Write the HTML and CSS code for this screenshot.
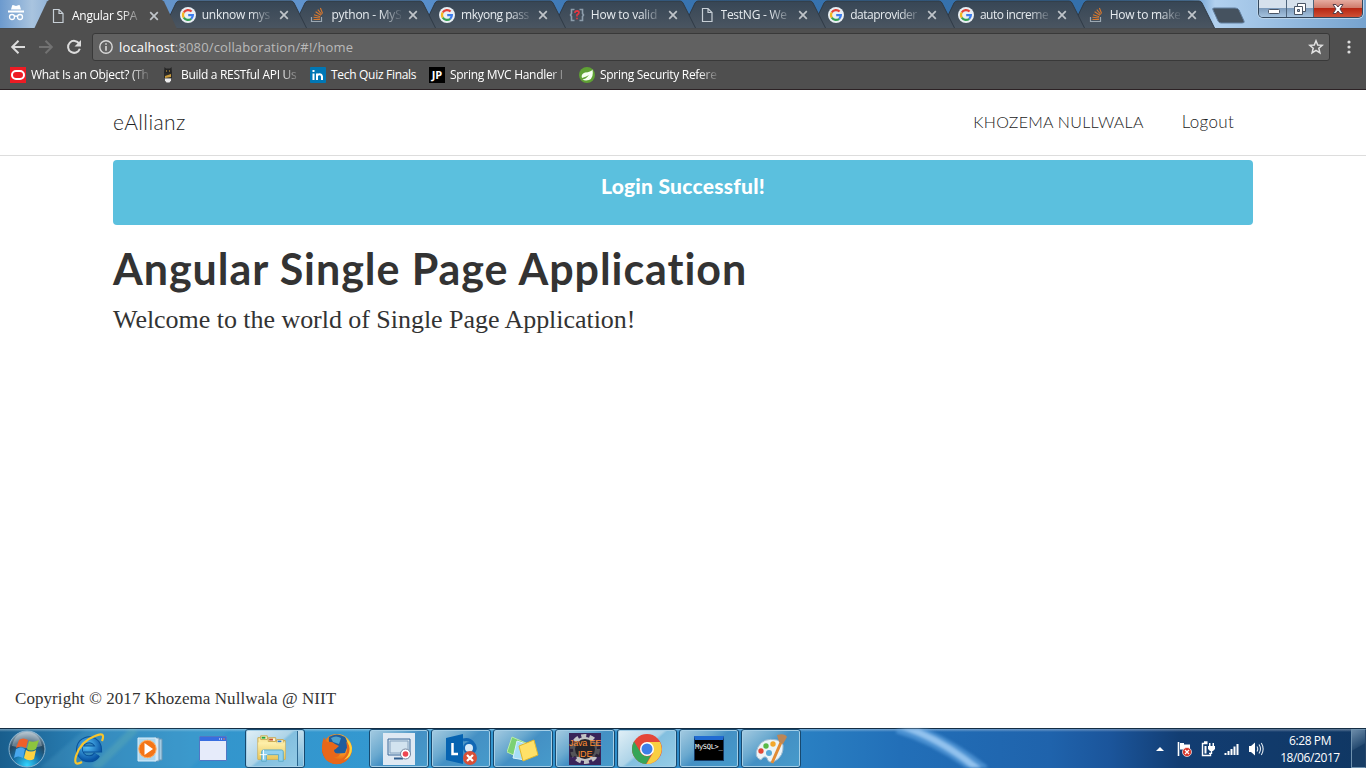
FILE: index.html
```html
<!DOCTYPE html>
<html lang="en">
<head>
<meta charset="utf-8">
<title>Angular SPA</title>
<link rel="stylesheet" href="styles.css">
</head>
<body>
<svg class="defs" width="0" height="0">
  <defs>
    <linearGradient id="tabFill" x1="0" y1="0" x2="0" y2="1"><stop offset="0" stop-color="#374655"/><stop offset="1" stop-color="#4a5561"/></linearGradient>
    <linearGradient id="folder" x1="0" y1="0" x2="0" y2="1"><stop offset="0" stop-color="#fff2b0"/><stop offset="1" stop-color="#e8c659"/></linearGradient>
    <radialGradient id="orb" cx=".5" cy=".95" r=".95"><stop offset="0" stop-color="#30d5ff"/><stop offset=".4" stop-color="#176fa5"/><stop offset=".7" stop-color="#23465f"/><stop offset="1" stop-color="#a9bdca"/></radialGradient>
    <radialGradient id="fox" cx=".65" cy=".3" r=".8"><stop offset="0" stop-color="#ffe04a"/><stop offset=".5" stop-color="#f58a1d"/><stop offset="1" stop-color="#c9400f"/></radialGradient>
    <radialGradient id="iefill" cx=".4" cy=".3" r=".8"><stop offset="0" stop-color="#5bc8fa"/><stop offset="1" stop-color="#0753a5"/></radialGradient>
    <symbol id="tabshape" viewBox="0 0 143 28"><path d="M0 28 12 3Q13 1 15 1H127Q129 1 130 3L142.500 28Z" fill="url(#tabFill)"/><path d="M0 28 12 3Q13 1 15 1H127Q129 1 130 3L142.500 28" fill="none" stroke="#2f3a45"/></symbol>
    <symbol id="doc" viewBox="0 0 16 16"><path d="M3.500 1.500H9L13 5.500V14.500H3.500ZM9 1.500V5.500H13" fill="none" stroke="currentColor" stroke-width="1.200"/></symbol>
    <symbol id="google" viewBox="0 0 16 16"><circle cx="8" cy="8" r="8" fill="#e9eff4"/><g fill="none" stroke-width="2.200"><path d="M11.600 4.600A5 5 0 0 0 3.700 5.500" stroke="#e44336"/><path d="M3.700 5.500A5 5 0 0 0 3.800 10.700" stroke="#f3b61f"/><path d="M3.800 10.700A5 5 0 0 0 11.200 11.800" stroke="#34a053"/><path d="M11.200 11.800A5 5 0 0 0 12.900 8.100H8.200" stroke="#3c7cec"/></g></symbol>
    <symbol id="stack" viewBox="0 0 16 16"><path d="M2.500 10V14.500H12.500V10" fill="none" stroke="#9ca8b2" stroke-width="1.200"/><path d="M4.500 12.500H11M4.500 10.300 11 11M5 7.700 11.200 9.700M6.600 4.700 12 8.200M8.800 2.600 12.800 7.500M11.400 1 13.600 6.500" stroke="#d7782e" stroke-width="1.100"/></symbol>
    <symbol id="question" viewBox="0 0 16 16"><path d="M5.500 2.500H2.500V6.500L1.500 8 2.500 9.500V13.500H5.500M10.500 2.500H13.500V6.500L14.500 8 13.500 9.500V13.500H10.500" fill="none" stroke="#8d9dab" stroke-width="1.600"/><path d="M6 6V5Q6.300 3.800 8 3.800 10 3.900 10 5.500 10 6.700 8 8V9.500M8 10.800V12.200" fill="none" stroke="#e23842" stroke-width="1.700"/></symbol>
    <symbol id="close" viewBox="0 0 10 10"><path d="M1.200 1.200 8.800 8.800M8.800 1.200 1.200 8.800" stroke="currentColor" stroke-width="1.700"/></symbol>
  </defs>
</svg>

<header class="browser">
  <div class="tabstrip">
    <svg class="incognito" viewBox="0 0 18 18"><path d="M5 2Q5 1 6 1L9 2 12 1Q13 1 13 2L14 5.500H4ZM1 6.500H17V8.500H1Z" fill="#fff"/><g fill="none" stroke="#fff" stroke-width="1.300"><circle cx="5" cy="13" r="2.500"/><circle cx="13" cy="13" r="2.500"/><path d="M7.500 12.500Q9 11.500 10.500 12.500"/></g></svg>
    <div class="tabs">
      <div class="tab active"><svg class="favicon"><use href="#doc"/></svg><span class="label">Angular SPA</span><svg class="x"><use href="#close"/></svg></div>
      <div class="tab t2"><svg class="shape"><use href="#tabshape"/></svg><svg class="favicon"><use href="#google"/></svg><span class="label">unknow mys</span><svg class="x"><use href="#close"/></svg></div>
      <div class="tab t3"><svg class="shape"><use href="#tabshape"/></svg><svg class="favicon"><use href="#stack"/></svg><span class="label">python - MyS</span><svg class="x"><use href="#close"/></svg></div>
      <div class="tab t4"><svg class="shape"><use href="#tabshape"/></svg><svg class="favicon"><use href="#google"/></svg><span class="label tight">mkyong pass</span><svg class="x"><use href="#close"/></svg></div>
      <div class="tab t5"><svg class="shape"><use href="#tabshape"/></svg><svg class="favicon"><use href="#question"/></svg><span class="label">How to valid</span><svg class="x"><use href="#close"/></svg></div>
      <div class="tab t6"><svg class="shape"><use href="#tabshape"/></svg><svg class="favicon"><use href="#doc"/></svg><span class="label">TestNG - We</span><svg class="x"><use href="#close"/></svg></div>
      <div class="tab t7"><svg class="shape"><use href="#tabshape"/></svg><svg class="favicon"><use href="#google"/></svg><span class="label tight">dataprovider</span><svg class="x"><use href="#close"/></svg></div>
      <div class="tab t8"><svg class="shape"><use href="#tabshape"/></svg><svg class="favicon"><use href="#google"/></svg><span class="label tight">auto increme</span><svg class="x"><use href="#close"/></svg></div>
      <div class="tab t9"><svg class="shape"><use href="#tabshape"/></svg><svg class="favicon"><use href="#stack"/></svg><span class="label">How to make</span><svg class="x"><use href="#close"/></svg></div>
    </div>
    <svg class="newtab" viewBox="0 0 34 18"><path d="M2 1H23Q26 1 27 3L32 14Q33 16 30 16H9Q7 16 6 14L1 3Q0 1 2 1Z" fill="#45525f" stroke="#6481a1"/></svg>
    <div class="winbuttons">
      <span class="wb min"><svg viewBox="0 0 14 14"><rect x="1.500" y="7.500" width="11" height="4" rx="1" fill="#fff" stroke="#4a5565"/></svg></span>
      <span class="wb max"><svg viewBox="0 0 14 14"><path d="M4.500 1.500H12.500V9.500H4.500Z" fill="#fff" stroke="#4a5565"/><path d="M1.500 4.500H9.500V12.500H1.500Z" fill="#fff" stroke="#4a5565"/><path d="M4.500 7.500H6.500V9.500H4.500Z" fill="#9db4cd" stroke="#4a5565"/></svg></span>
      <span class="wb quit"><svg viewBox="0 0 14 14"><path d="M2 2.500H5L7 5 9 2.500H12L9 7 12 11.500H9L7 9 5 11.500H2L5 7Z" fill="#fff" stroke="#573f4a"/></svg></span>
    </div>
  </div>
  <div class="toolbar">
    <svg class="nav" viewBox="0 0 16 16"><path d="M15 8H2.500M8.500 1.700 2.200 8 8.500 14.300" fill="none" stroke="#dcdcdc" stroke-width="2"/></svg>
    <svg class="nav" viewBox="0 0 16 16"><path d="M1 8H13.500M7.500 1.700 13.800 8 7.500 14.300" fill="none" stroke="#727272" stroke-width="2"/></svg>
    <svg class="nav" viewBox="0 0 16 16"><path d="M13.200 4.700A6 6 0 1 0 13.800 9.700" fill="none" stroke="#dcdcdc" stroke-width="2"/><path d="M15 1V7.500H8.500Z" fill="#dcdcdc"/></svg>
    <div class="omnibox">
      <svg class="info" viewBox="0 0 14 14"><circle cx="7" cy="7" r="6.200" fill="none" stroke="#d8d8d8" stroke-width="1.400"/><path d="M7 3.200V4.800M7 6V10.700" stroke="#d8d8d8" stroke-width="1.600"/></svg>
      <span class="url"><b>localhost</b>:8080/collaboration/#!/home</span>
      <svg class="star" viewBox="0 0 16 16"><path d="M8 1.800 9.700 6 14.300 6.300 10.800 9.300 11.900 13.800 8 11.300 4.100 13.800 5.200 9.300 1.700 6.300 6.300 6Z" fill="none" stroke="#e2e2e2" stroke-width="1.500"/></svg>
    </div>
    <svg class="dots" viewBox="0 0 4 14"><g fill="#dcdcdc"><circle cx="2" cy="2" r="1.600"/><circle cx="2" cy="7" r="1.600"/><circle cx="2" cy="12" r="1.600"/></g></svg>
  </div>
  <nav class="bookmarks">
    <a class="bm b1"><svg viewBox="0 0 16 16"><path fill="#ed1c24" d="M0 0H16V16H0Z"/><rect x="2" y="4" width="12" height="8" rx="4" fill="none" stroke="#fff" stroke-width="2"/></svg><span>What Is an Object? (Th</span></a>
    <a class="bm b2"><svg viewBox="0 0 16 16"><path d="M4.500 0 6 1.500H10L11.500 0 12 6H4Z" fill="#252525"/><path d="M6 4H7M9 4H10" stroke="#d8a83a"/><path d="M4 6H12V11H4Z" fill="#2b2a28"/><path d="M5 9 11 7V10L5 11Z" fill="#c79a3c"/><path d="M5 11.500H11V13.500L9.500 15.500H6.500L5 13.500Z" fill="#eee"/></svg><span>Build a RESTful API Us</span></a>
    <a class="bm b3"><svg viewBox="0 0 16 16"><rect width="16" height="16" rx="1" fill="#0077b5"/><path d="M3.500 6.500V13M3.500 3V5M7 13V6.500M7 9Q7.500 7.300 9.500 7.300T12 9.500V13" fill="none" stroke="#fff" stroke-width="2"/></svg><span>Tech Quiz Finals</span></a>
    <a class="bm b4"><i class="jp">JP</i><span>Spring MVC Handler I</span></a>
    <a class="bm b5"><svg viewBox="0 0 16 16"><circle cx="8" cy="8" r="8" fill="#5fa134"/><path d="M13.500 2.500Q12 5 6 5.500 1.500 7 3 11 7 10 10 8 7 12 3.500 12.500 6 14 10 13 15 11 13.500 2.500Z" fill="#f5fff0"/></svg><span>Spring Security Refere</span></a>
  </nav>
</header>

<main class="page">
  <nav class="navbar"><div class="container">
    <a class="brand">eAllianz</a>
    <div class="links"><a class="user">KHOZEMA NULLWALA</a><a class="logout">Logout</a></div>
  </div></nav>
  <section class="container content">
    <div class="alert">Login Successful!</div>
    <h1>Angular Single Page Application</h1>
    <p>Welcome to the world of Single Page Application!</p>
  </section>
  <footer>Copyright © 2017 Khozema Nullwala @ NIIT</footer>
</main>

<div class="taskbar">
  <svg class="wallpaper" viewBox="0 0 1366 40" preserveAspectRatio="none"><path d="M40 40 85 0H230L190 40Z" fill="#59a7cf" opacity=".22"/><path d="M95 40 135 0" stroke="#8fd3a4" stroke-width="8" opacity=".18"/><path d="M898 -3Q941 10 983 44" fill="none" stroke="#70b2ec" stroke-width="15" opacity=".5"/><path d="M902 -3Q943 11 981 44" fill="none" stroke="#b2d9fb" stroke-width="7" opacity=".7"/></svg>
  <div class="launch start"><svg viewBox="0 0 38 38"><circle cx="19" cy="19" r="18" fill="url(#orb)" stroke="#8bb4cf"/><path d="M4 16Q7 2 19 2T34 16Q20 20 4 16Z" fill="#fff" opacity=".3"/><path d="M11 10Q15 7 20 10L18 18Q13 15 8 18Z" fill="#ee602a"/><path d="M21 11Q26 13 31 10L28 19Q23 22 19 19Z" fill="#8dc53d"/><path d="M8 19Q13 16 17 19L15 28Q10 25 6 28Z" fill="#48a7ed"/><path d="M18 20Q23 23 28 20L26 29Q21 32 16 28Z" fill="#fed241"/></svg></div>
  <div class="launch"><svg viewBox="0 0 32 32"><path d="M24 21.500A9.500 9.500 0 1 1 25.500 16H10" fill="none" stroke="#08529b" stroke-width="7"/><path d="M24 21.500A9.500 9.500 0 1 1 25.500 16H10" fill="none" stroke="url(#iefill)" stroke-width="5"/><path d="M9 29Q0 34 3 23 8 8 22 3 33-2 29 8" fill="none" stroke="#f8c52c" stroke-width="2.200"/></svg></div>
  <div class="launch media"><svg viewBox="0 0 32 32"><path d="M24 6H28V27H24Z" fill="#a5cbe2" stroke="#6997b6"/><path d="M20 5H25V28H20Z" fill="#d6e8f3" stroke="#729cb9"/><path d="M4 5H22V28H4Z" fill="#add7ee" stroke="#d9edfa"/><circle cx="13.500" cy="16" r="8.700" fill="#f47516" stroke="#ffad63"/><path d="M10.500 10V22L19 16Z" fill="#fff"/></svg></div>
  <div class="launch"><svg viewBox="0 0 32 32"><path d="M2.500 3.500H29.500V27.500H2.500Z" fill="#e6ebfa" stroke="#5177c4"/><path d="M3 4H29V8H3Z" fill="#376de0"/><path d="M22 6H23M24 6H25" stroke="#fff"/><path d="M26 6H28" stroke="#ee7450"/></svg></div>
  <div class="task lit group"><svg viewBox="0 0 34 34"><path d="M2 5H12L14 8H31V28H2Z" fill="url(#folder)" stroke="#c9a64c"/><path d="M5 3H12V7H5ZM13 5H21V9H13ZM22 7H29V11H22Z" fill="#fff6d2" stroke="#c9a64c"/><path d="M6 4H10V6H6Z" fill="#20a43d"/><path d="M14 6H18V8H14Z" fill="#c64b2b"/><path d="M23 8H27V10H23Z" fill="#2a7bcf"/><path d="M2 10H31V28H2Z" fill="url(#folder)" opacity=".85"/><path d="M6 30V20Q6 18 8 18H27Q29 18 29 20V30H24V23H11V30Z" fill="#91d1ee" stroke="#5caac8"/><path d="M4 23H12M8 18V28" stroke="#fff"/></svg></div>
  <div class="launch fox"><svg viewBox="0 0 32 32"><circle cx="16" cy="16" r="15" fill="url(#fox)"/><path d="M8 4Q16-1 24 4 29 10 24 20L12 21Q7 13 8 4Z" fill="#1f5d9d"/><path d="M10 5Q15 2 20 5L18 11 12 9Z" fill="#4ca1cf"/><path d="M3 4Q4 8 6 9 11 8 14 11L18 13Q15 16 13 17 13 21 19 21 17 25 12 24 16 29 22 25 28 20 25 8 34 19 25 28 15 35 5 27-2 17 3 4Z" fill="#e8671a"/><path d="M25 6Q33 18 23 27 31 24 31 15 30 9 25 6Z" fill="#ffd33c"/></svg></div>
  <div class="task rec"><svg viewBox="0 0 32 32"><path fill="#dfe9f3" d="M0 0H32V32H0Z"/><path d="M5 6H27V22H5Z" fill="#d2e3ef" stroke="#3c6898"/><path d="M7 8H25V20H7Z" fill="none" stroke="#86a3bf"/><path d="M11 25.500H20" stroke="#315f8f" stroke-width="2"/><circle cx="22.500" cy="21" r="5" fill="#fff" stroke="#74869e"/><circle cx="22.500" cy="21" r="2.800" fill="#ee4650"/></svg></div>
  <div class="task"><svg viewBox="0 0 32 32"><path d="M18 7Q24 5 28 10 34 17 24 22" fill="none" stroke="#1268b5" stroke-width="3"/><circle cx="24" cy="15" r="5" fill="#d8eaf8" stroke="#1268b5" stroke-width="2"/><path d="M1 5 18 1V31L1 27Z" fill="#0663b1"/><path d="M7.500 10V21H13" fill="none" stroke="#fff" stroke-width="2.500"/><circle cx="25" cy="25" r="7" fill="#d75038"/><path d="M22 22 28 28M28 22 22 28" stroke="#fff" stroke-width="2.200"/></svg></div>
  <div class="task"><svg viewBox="0 0 32 32"><path d="M5 4 19 10 13 25 0 19Z" fill="#7cd174" stroke="#b7eba9"/><path d="M10 8 22 12 18 27 6 25Z" fill="#a7def6" stroke="#daf2fc"/><path d="M12 13 27 7 31 22 16 28Z" fill="#ffe168" stroke="#e0b72d"/></svg></div>
  <div class="task java"><div class="javaicon"><svg viewBox="0 0 32 32"><rect width="32" height="32" fill="#392459"/><circle cx="16" cy="16" r="13" fill="none" stroke="#c3c3c5" stroke-width="4" stroke-dasharray="5 3.168"/><circle cx="16" cy="16" r="11" fill="#252329" stroke="#c3c3c5" stroke-width="2"/><path d="M1 8H31V24H1Z" fill="#252329" opacity=".7"/></svg><div class="javatext"><span>Java EE</span><span>IDE</span></div></div></div>
  <div class="task lit"><svg viewBox="0 0 32 32"><circle cx="16" cy="16" r="15" fill="#e44739"/><path d="M3 8.500 10 20A7 7 0 0 0 20 22L15 31A15 15 0 0 1 3 8.500Z" fill="#36a558"/><path d="M16 9H29A15 15 0 0 1 15.500 31L22 20Z" fill="#f9cf42"/><circle cx="16" cy="16" r="7" fill="#fff"/><circle cx="16" cy="16" r="5.500" fill="#3e7fe9"/></svg></div>
  <div class="task"><div class="console"><span>MySQL&gt;_</span></div></div>
  <div class="task"><svg viewBox="0 0 32 32"><path d="M22 7Q8 4 3 14-2 24 6 27 9 22 12 25 13 31 20 28 29 23 28 12Q27 8 22 7Z" fill="#ecf4f7" stroke="#9dbbd0"/><g><circle cx="6" cy="18" r="2.700" fill="#e34836"/><circle cx="11" cy="13" r="2.700" fill="#58b947"/><circle cx="18" cy="11" r="2.700" fill="#f2a72c"/><circle cx="14" cy="20" r="3" fill="#58a9d6"/></g><path d="M27 7 17 30" stroke="#e28b34" stroke-width="3"/><path d="M22 2Q30 0 32 4L28 11 24 9Z" fill="#bb8656"/></svg></div>
  <div class="tray">
    <svg class="up" viewBox="0 0 8 5"><path d="M0 5 4 1 8 5Z" fill="#fff"/></svg>
    <svg class="ti" viewBox="0 0 16 16"><path d="M2.500 1V15" stroke="#fff" stroke-width="1.600"/><path d="M4 2H8V3.500H14V10H8V8.500H4Z" fill="#fff"/><circle cx="11" cy="11" r="4.500" fill="#d73125" stroke="#fff" stroke-width=".7"/><path d="M9 9 13 13M13 9 9 13" stroke="#fff" stroke-width="1.300"/></svg>
    <svg class="ti" viewBox="0 0 16 16"><path d="M7.500 2.500H2.500V14.500H10.500V12.500M4 1H7.500" fill="none" stroke="#fff" stroke-width="1.400"/><path d="M4.500 5H6.500V12.500H4.500Z" fill="#fff"/><path d="M8 5H15V8L13 10H10L8 8ZM9 2H10.500V5H9ZM12.500 2H14V5H12.500ZM10.800 10H12.200V13H9V11.800H10.800Z" fill="#fff"/></svg>
    <svg class="ti sig" viewBox="0 0 16 16"><path d="M1.500 12V14M4.500 10V14M7.500 8V14M10.500 5.500V14M13.500 3V14" stroke="#fff" stroke-width="2"/></svg>
    <svg class="ti" viewBox="0 0 16 16"><path d="M1 5H3L7 1.500V14.500L3 11H1Z" fill="#fff"/><path d="M9 5.500Q10.500 8 9 10.500M11 3.500Q14 8 11 12.500M13.300 2Q17 8 13.300 14" fill="none" stroke="#e1e9f1" stroke-width="1.100"/></svg>
    <div class="clock"><span>6:28 PM</span><span>18/06/2017</span></div>
    <i class="desktop"></i>
  </div>
</div>
</body>
</html>
```
FILE: styles.css
```css
* { box-sizing: border-box; }
body { margin: 0; width: 1366px; height: 768px; overflow: hidden; display: flex; flex-direction: column; background: #fff; font-family: "Open Sans", "Noto Sans", sans-serif; }
svg { display: block; flex: none; }
.defs { position: absolute; }
.browser { height: 90px; flex: none; background: #4f4f4f; border-bottom: 1px solid #2c2225; }

.tabstrip { height: 28px; display: flex; background: linear-gradient(90deg, #6c9ace 0, #a9c4df 32px, #6795c9 80px, #5c92cf 400px, #3975b2 600px, #3470ab 1080px, #5890c8 1190px, #b2d1ef 1215px, #76a3cf 1366px); }
.incognito { width: 18px; height: 18px; margin: 4px 0 0 7px; }
.tabs { display: flex; margin-left: 9px; width: 1180px; flex: none; }
.tab { position: relative; width: 143px; height: 28px; margin-right: -13.3px; display: flex; align-items: center; padding: 2px 13px 0 16px; flex: none; color: #c7cfd6; }
.tab.active { z-index: 10; background: #4f4f4f; clip-path: polygon(0 100%, 13px 5%, 15px 0, 128px 0, 130px 5%, 143px 100%); height: 29px; }
.t2 { z-index: 9; } .t3 { z-index: 8; } .t4 { z-index: 7; } .t5 { z-index: 6; } .t6 { z-index: 5; } .t7 { z-index: 4; } .t8 { z-index: 3; } .t9 { z-index: 2; }
.shape { position: absolute; left: 0; top: 0; width: 143px; height: 28px; }
.favicon { position: relative; width: 16px; height: 16px; }
.label { position: relative; width: 70px; margin-left: 6px; white-space: nowrap; font-size: 12px; letter-spacing: -.25px; line-height: 18px; color: #e6ebef; -webkit-mask-image: linear-gradient(90deg, #000 70%, rgba(0,0,0,.15) 98%); }
.label.tight { letter-spacing: -.5px; }
.active .label { color: #fff; }
.x { position: relative; width: 10px; height: 10px; margin-left: 7px; color: #bfc4c9; }
.newtab { width: 34px; height: 18px; margin: 7px 0 0 -2px; }
.winbuttons { display: flex; width: 105px; height: 18px; margin: 0 3px 0 auto; border: 1px solid #33485e; border-top: 0; border-radius: 0 0 5px 5px; overflow: hidden; flex: none; box-shadow: 0 0 0 1px #bbd4ea; }
.wb { display: flex; justify-content: center; align-items: center; flex: 0 0 28px; border-right: 1px solid #4e657c; background: linear-gradient(#d6e1ec 0 48%, #7e9cbc 50%, #a5c3df); }
.wb.min { padding-left: 3px; }
.wb.max { flex-basis: 27px; }
.wb svg { width: 14px; height: 14px; }
.wb.quit { flex: 1; border: 0; background: linear-gradient(#e6aca0 0, #cf7b6b 46%, #b72713 50%, #cf5035); }

.toolbar { height: 34px; display: flex; align-items: center; padding-left: 10px; padding-top: 3px; border-top: 1px solid #484b4e; }
.nav { width: 16px; height: 16px; margin-right: 12px; }
.omnibox { width: 1238px; height: 28px; margin-left: -2px; border: 1px solid #393939; border-radius: 3px; background: #616161; display: flex; align-items: center; padding: 0 6px; }
.info { width: 14px; height: 14px; }
.url { margin: -1px 0 0 6px; font-size: 13px; color: #bababa; letter-spacing: .15px; white-space: nowrap; }
.url b { color: #fff; font-weight: 400; }
.star { width: 16px; height: 16px; margin: 0 -1px 0 auto; }
.dots { width: 4px; height: 14px; margin-left: 17px; }

.bookmarks { height: 27px; display: flex; align-items: center; padding: 0 0 1px 10px; color: #fff; font-size: 12px; }
.bm { display: flex; align-items: center; white-space: nowrap; flex: none; height: 20px; }
.bm svg { width: 16px; height: 16px; margin-right: 5px; }
.bm span { display: block; letter-spacing: -.3px; line-height: 18px; }
.b1 { width: 150px; } .b2 { width: 150px; } .b3 { width: 119px; } .b4 { width: 150px; } .b5 { width: 150px; }
.b1 span, .b2 span, .b4 span, .b5 span { width: 118px; -webkit-mask-image: linear-gradient(90deg, #000 84%, rgba(0,0,0,.1)); }
.jp { width: 16px; height: 16px; background: #000; color: #fff; font: bold 11px/16px "Open Sans", sans-serif; text-align: center; margin-right: 5px; }

.page { height: 638px; flex: none; display: flex; flex-direction: column; color: #333; }
.container { width: 1140px; margin: 0 auto; }
.navbar { height: 66px; border-bottom: 1px solid #ddd; font-family: Lato, sans-serif; font-weight: 300; color: #222; }
.navbar .container { display: flex; align-items: center; height: 62px; }
.brand { font-size: 21px; letter-spacing: .4px; }
.links { margin-left: auto; display: flex; align-items: baseline; gap: 38px; padding-right: 19px; font-size: 16px; }
.user { letter-spacing: .28px; }
.logout { font-size: 17px; letter-spacing: .3px; }
.alert { height: 65px; margin-top: 4px; padding-top: 13px; border-radius: 4px; background: #5bc0de; color: #fff; font: 900 21px/26px Lato, sans-serif; letter-spacing: .25px; text-align: center; }
h1 { margin: 20px 0 0; font: bold 43px/48px Lato, sans-serif; letter-spacing: .94px; white-space: nowrap; }
p { margin: 11px 0 0; font: 26px/32px "Liberation Serif", serif; letter-spacing: -.04px; white-space: nowrap; }
footer { margin: auto 0 19px 15px; font: 17px/20px "Liberation Serif", serif; letter-spacing: .07px; }

.taskbar { position: relative; height: 40px; flex: none; display: flex; align-items: center; border-top: 1px solid #142d43; background: linear-gradient(180deg, rgba(255,255,255,.35) 0, rgba(255,255,255,0) 3px), linear-gradient(90deg, #195e8d 0, #2b82b8 90px, #3395cc 190px, #3499d1 430px, #2d87c7 760px, #226fb8 900px, #1f63ac 1050px, #1b559b 1110px, #123d72 1180px, #103763 1366px); }
.wallpaper { position: absolute; left: 0; top: 0; width: 1366px; height: 39px; overflow: hidden; filter: blur(1.500px); }
.launch { position: relative; width: 62px; display: flex; justify-content: center; flex: none; padding-right: 2px; }
.launch.media { padding-right: 4px; }
.launch svg { width: 32px; height: 32px; }
.launch.start { width: 59px; padding-right: 5px; }
.launch.start svg { width: 38px; height: 38px; }
.task { position: relative; width: 60px; height: 39px; margin-right: 2px; border: 1px solid #17496f; border-radius: 3px; box-shadow: inset 0 0 0 1px #a5cfe7; display: flex; align-items: center; justify-content: center; flex: none; background: linear-gradient(140deg, #a5cbe1 0, #6aa9cf 35%, #4490c4 50%, #479bcb); }
.task.lit { background: linear-gradient(140deg, #e2f0f7, #aed4e8 46%, #83bfdf 50%, #96cde7); }
.task.group { padding-right: 6px; }
.task.group::after { content: ""; position: absolute; right: 1px; top: 1px; width: 5px; height: 35px; border-left: 1px solid #2b668f; background: linear-gradient(#c4deec, #75b8dc); }
.task svg { width: 32px; height: 32px; }
.javaicon { position: relative; width: 32px; height: 32px; }
.javatext { position: absolute; left: -1px; top: 5px; width: 34px; display: flex; flex-direction: column; align-items: center; color: #ff8c32; font: 9px/11px "Liberation Sans", sans-serif; letter-spacing: -.2px; white-space: nowrap; }
.console { width: 30px; height: 25px; border: 1px solid #153a65; border-top: 4px solid #216bd2; background: #000; color: #fff; }
.console span { display: block; margin-top: 2px; font: 7px/10px "DejaVu Sans Mono", monospace; letter-spacing: -.3px; }
.tray { position: relative; margin-left: auto; display: flex; align-items: center; height: 39px; color: #fff; }
.up { width: 8px; height: 5px; margin-right: 12px; }
.ti { width: 16px; height: 16px; margin-right: 8px; }
.clock { width: 66px; margin-left: 5px; margin-right: 8px; display: flex; flex-direction: column; align-items: center; font-size: 12px; line-height: 17px; letter-spacing: -.4px; }
.desktop { width: 15px; height: 39px; border: 1px solid #6e91ae; border-right-color: #26466a; background: linear-gradient(150deg, #6b8ba9, #284d73 45%, #183d65 48%); }
```
